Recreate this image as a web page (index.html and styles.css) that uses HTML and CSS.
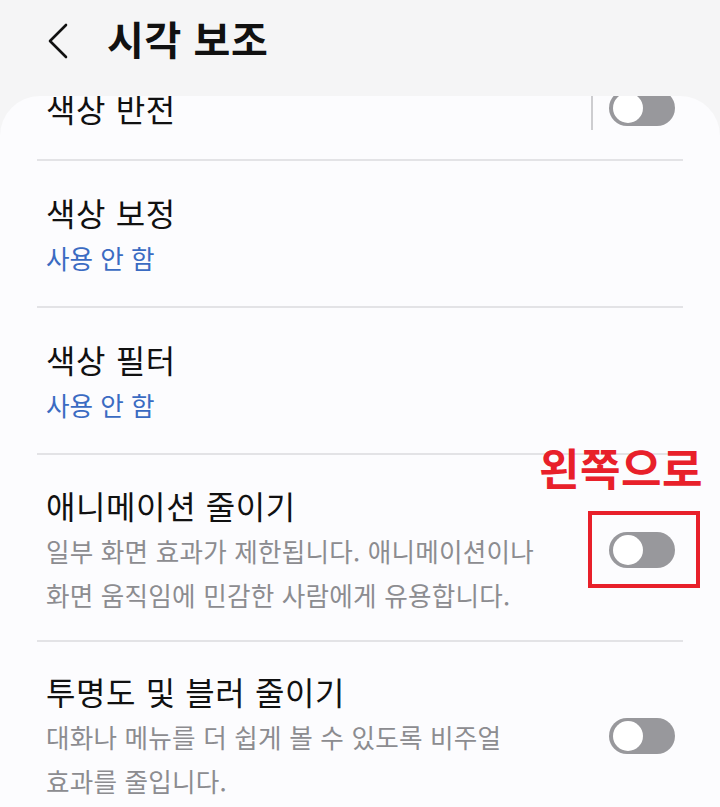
FILE: index.html
```html
<!DOCTYPE html>
<html lang="ko">
<head>
<meta charset="utf-8">
<title>시각 보조</title>
<link rel="stylesheet" href="styles.css">
</head>
<body>
<div class="screen">
  <header class="appbar">
    <svg class="back" width="24" height="36" viewBox="0 0 24 36" aria-hidden="true">
      <polyline points="19,2 3,18 19,34" fill="none" stroke="#111" stroke-width="2.6" stroke-linecap="round" stroke-linejoin="round"/>
    </svg>
    <h1 class="title">시각 보조</h1>
  </header>

  <main class="card">
    <div class="row row-first">
      <div class="text">
        <div class="label">색상 반전</div>
      </div>
      <div class="ctrl">
        <span class="vdiv"></span>
        <span class="switch"><span class="knob"></span></span>
      </div>
    </div>

    <div class="row">
      <div class="text">
        <div class="label">색상 보정</div>
        <div class="value">사용 안 함</div>
      </div>
    </div>

    <div class="row">
      <div class="text">
        <div class="label">색상 필터</div>
        <div class="value">사용 안 함</div>
      </div>
    </div>

    <div class="row row-desc annotated">
      <div class="text">
        <div class="label">애니메이션 줄이기</div>
        <div class="desc">일부 화면 효과가 제한됩니다. 애니메이션이나<br>화면 움직임에 민감한 사람에게 유용합니다.</div>
      </div>
      <div class="ctrl">
        <span class="switch"><span class="knob"></span></span>
      </div>
      <span class="note">왼쪽으로</span>
      <span class="mark"></span>
    </div>

    <div class="row row-desc">
      <div class="text">
        <div class="label">투명도 및 블러 줄이기</div>
        <div class="desc">대화나 메뉴를 더 쉽게 볼 수 있도록 비주얼<br>효과를 줄입니다.</div>
      </div>
      <div class="ctrl">
        <span class="switch"><span class="knob"></span></span>
      </div>
    </div>
  </main>
</div>
</body>
</html>
```

FILE: styles.css
```css
* { box-sizing: border-box; }

html, body {
  margin: 0;
  padding: 0;
  background: #f5f5f6;
}

body {
  font-family: "Noto Sans CJK KR", "Noto Sans", sans-serif;
  color: #111;
}

.screen {
  width: 720px;
  height: 807px;
  overflow: hidden;
  display: flex;
  flex-direction: column;
}

.appbar {
  height: 96px;
  flex: none;
  display: flex;
  align-items: center;
  padding: 0 0 0 47px;
  gap: 36px;
}

.back {
  flex: none;
  margin-top: -14px;
}

.title {
  margin: -21px 0 0 0;
  font-size: 40px;
  line-height: 50px;
  font-weight: 700;
  letter-spacing: 0.6px;
}

.card {
  flex: 1;
  background: #fcfcfe;
  border-radius: 40px 40px 0 0;
  overflow: hidden;
  padding: 0 37px;
}

.row {
  display: flex;
  align-items: center;
  padding: 29px 8px 29px 9px;
  border-top: 2px solid #e3e3e6;
  position: relative;
}

.row-first {
  border-top: none;
  margin-top: -41px;
  padding-top: 31px;
  padding-bottom: 29px;
}

.row-desc {
  padding-top: 28px;
  padding-bottom: 24px;
}

.row-desc:last-child {
  padding-top: 27px;
}

.text {
  flex: 1;
  min-width: 0;
}

.label {
  font-size: 32px;
  line-height: 44px;
  letter-spacing: 0.6px;
  color: #111;
}

.value {
  margin-top: 5px;
  font-size: 25.6px;
  line-height: 38px;
  color: #3a6bc2;
}

.desc {
  margin-top: 2px;
  font-size: 25.6px;
  line-height: 43.5px;
  letter-spacing: 0.2px;
  color: #8c8c90;
}

.ctrl {
  flex: none;
  display: flex;
  align-items: center;
}

.vdiv {
  width: 2px;
  height: 43px;
  background: #cdcdd0;
  margin-right: 16px;
}

.switch {
  width: 66px;
  height: 36px;
  border-radius: 18px;
  background: #98989c;
  display: flex;
  align-items: center;
  padding-left: 4px;
}

.knob {
  width: 30px;
  height: 30px;
  border-radius: 50%;
  background: #ffffff;
}

.note {
  position: absolute;
  right: -20px;
  top: -13px;
  font-size: 44px;
  line-height: 50px;
  font-weight: 700;
  color: #e8202a;
  letter-spacing: 0.5px;
}

.mark {
  position: absolute;
  left: 551px;
  top: 56px;
  width: 112px;
  height: 77px;
  border: 4px solid #e8202a;
}
```
